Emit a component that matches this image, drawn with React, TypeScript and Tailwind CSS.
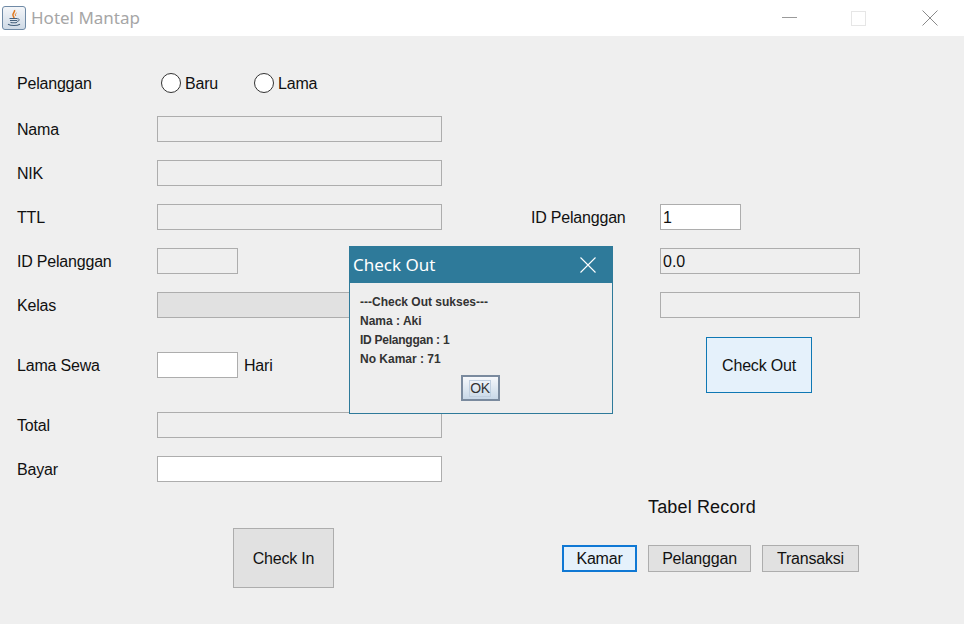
import React from 'react';

const titleFont = "font-['Noto_Sans','Liberation_Sans',sans-serif]";

const JavaIcon = () => (
  <div className="w-[24px] h-[24px] ml-[2px] rounded-[3px] border border-[#6f8aa6] bg-gradient-to-b from-[#f4f6f9] to-[#cfdae6] flex items-center justify-center">
    <svg width="16" height="18" viewBox="0 0 16 18" fill="none">
      <path d="M8.5 1C9.5 3 6 4.5 7 6.5C7.4 7.3 8 8 8 9" stroke="#e2791e" strokeWidth="1.5" />
      <path d="M10.5 4C9 5 9 6 10 7" stroke="#e2791e" strokeWidth="1" />
      <path d="M3.5 9.5H11.5M4 11.5H11M4.5 13.2C6 14 9.5 14 11 13.2" stroke="#44607c" strokeWidth="1.1" />
      <path d="M11.5 10C14 9.5 14 12 11 12.4" stroke="#44607c" strokeWidth="0.9" />
      <path d="M2 15.2C5 17 11 17 14 15.2" stroke="#44607c" strokeWidth="1.1" />
    </svg>
  </div>
);

const Field = ({ width, value, white, dark }: { width: string; value?: string; white?: boolean; dark?: boolean }) => (
  <div
    className={`${width} h-[26px] border border-[#adadad] flex items-center pl-[2px] pt-[2px] text-[16px] text-[#111] ${
      white ? 'bg-white' : dark ? 'bg-[#e1e1e1]' : 'bg-[#efefef]'
    }`}
  >
    {value}
  </div>
);

const Row = ({ label, children }: { label: string; children: React.ReactNode }) => (
  <div className="flex items-center h-[26px]">
    <span className="w-[140px] pt-[2px] text-[16px] tracking-[-0.2px] text-[#111]">{label}</span>
    {children}
  </div>
);

const Radio = ({ label }: { label: string }) => (
  <div className="flex items-center gap-[4px]">
    <div className="w-[20px] h-[20px] rounded-full border border-[#333] bg-white" />
    <span className="pt-[2px] text-[16px] tracking-[-0.2px] text-[#111]">{label}</span>
  </div>
);

const SmallButton = ({ label, width, active }: { label: string; width: string; active?: boolean }) => (
  <button
    className={`${width} h-[27px] text-[16px] tracking-[-0.2px] text-[#111] flex items-center justify-center ${
      active ? 'bg-[#e5f1fb] border-2 border-[#0f78d4]' : 'bg-[#e1e1e1] border border-[#adadad]'
    }`}
  >
    {label}
  </button>
);

export default function App() {
  return (
    <div className="relative w-[964px] h-[624px] overflow-hidden flex flex-col bg-[#efefef] font-['Liberation_Sans',sans-serif]">
      {/* title bar */}
      <div className="h-[36px] bg-white flex items-center">
        <JavaIcon />
        <span className={`ml-[5px] text-[17px] text-[#a6a6a6] ${titleFont}`}>Hotel Mantap</span>
        <div className="ml-auto flex items-center">
          <div className="w-[15px] h-px mb-[2px] bg-[#9a9a9a]" />
          <div className="ml-[54px] w-[15px] h-[15px] border border-[#e6e6e6]" />
          <svg className="ml-[56px] mr-[26px]" width="16" height="16" viewBox="0 0 16 16" stroke="#8a8a8a" strokeWidth="1">
            <path d="M0.5 0.5L15.5 15.5M15.5 0.5L0.5 15.5" />
          </svg>
        </div>
      </div>

      <div className="flex flex-1">
        {/* form kiri */}
        <div className="w-[442px] pl-[17px] pt-[34px] flex flex-col">
          <Row label="Pelanggan">
            <div className="flex items-center gap-[36px] ml-[4px]">
              <Radio label="Baru" />
              <Radio label="Lama" />
            </div>
          </Row>
          <div className="mt-[20px] flex flex-col gap-[18px]">
            <Row label="Nama"><Field width="w-[285px]" /></Row>
            <Row label="NIK"><Field width="w-[285px]" /></Row>
            <Row label="TTL"><Field width="w-[285px]" /></Row>
            <Row label="ID Pelanggan"><Field width="w-[81px]" /></Row>
            <Row label="Kelas"><Field width="w-[285px]" dark /></Row>
          </div>
          <div className="mt-[34px]">
            <Row label="Lama Sewa">
              <Field width="w-[81px]" white />
              <span className="ml-[6px] pt-[2px] text-[16px] tracking-[-0.2px] text-[#111]">Hari</span>
            </Row>
          </div>
          <div className="mt-[34px] flex flex-col gap-[18px]">
            <Row label="Total"><Field width="w-[285px]" /></Row>
            <Row label="Bayar"><Field width="w-[285px]" white /></Row>
          </div>
          <button className="mt-[46px] ml-[216px] w-[101px] h-[60px] pt-[2px] bg-[#e1e1e1] border border-[#adadad] text-[16px] tracking-[-0.2px] text-[#111]">
            Check In
          </button>
        </div>

        {/* panel kanan */}
        <div className="ml-[89px] pt-[168px] flex flex-col">
          <div className="flex items-center h-[26px]">
            <span className="w-[129px] pt-[2px] text-[16px] tracking-[-0.2px] text-[#111]">ID Pelanggan</span>
            <Field width="w-[81px]" value="1" white />
          </div>
          <div className="ml-[129px] mt-[18px] flex flex-col gap-[18px]">
            <Field width="w-[200px]" value="0.0" />
            <Field width="w-[200px]" />
          </div>
          <button className="mt-[19px] ml-[175px] w-[106px] h-[56px] pt-[2px] bg-[#e5f1fb] border border-[#0f78b4] text-[16px] tracking-[-0.2px] text-[#111]">
            Check Out
          </button>
          <div className="mt-[103px] ml-[117px] h-[22px] flex items-center text-[18px] tracking-[0.15px] text-[#111]">
            Tabel Record
          </div>
          <div className="mt-[27px] ml-[31px] flex gap-[11px]">
            <SmallButton label="Kamar" width="w-[75px]" active />
            <SmallButton label="Pelanggan" width="w-[103px]" />
            <SmallButton label="Transaksi" width="w-[97px]" />
          </div>
        </div>
      </div>

      {/* dialog Check Out */}
      <div className="absolute left-[349px] top-[246px] w-[264px] h-[168px] border border-[#2e7a9a] bg-[#eeeeee] flex flex-col">
        <div className="h-[36px] bg-[#2e7a9a] flex items-center justify-between pl-[3px] pr-[16px]">
          <span className={`text-[17px] text-white ${titleFont}`}>Check Out</span>
          <svg width="16" height="16" viewBox="0 0 16 16" stroke="#ffffff" strokeWidth="1.1">
            <path d="M0.5 0.5L15.5 15.5M15.5 0.5L0.5 15.5" />
          </svg>
        </div>
        <div className="pl-[10px] pt-[10px] flex flex-col font-bold text-[12px] leading-[19px] text-[#333]">
          <span>---Check Out sukses---</span>
          <span>Nama : Aki</span>
          <span className="tracking-[-0.25px]">ID Pelanggan : 1</span>
          <span>No Kamar : 71</span>
        </div>
        <button className="self-center -translate-x-[1px] mt-[6px] w-[39px] h-[26px] border-[2px] border-[#7a8a9e] bg-gradient-to-b from-[#f6f8fb] to-[#c8d8e8] flex items-center justify-center">
          <span className="border border-[#c0cfe0] font-medium text-[14px] leading-[15px] tracking-[-0.4px] text-[#333]">OK</span>
        </button>
      </div>
    </div>
  );
}
